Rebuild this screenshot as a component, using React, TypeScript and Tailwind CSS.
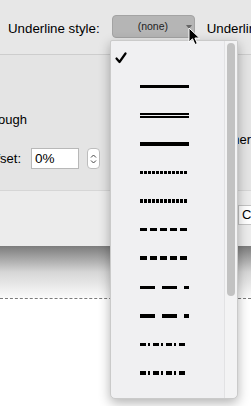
import React from 'react';

type Kind =
  | 'none'
  | 'single'
  | 'double'
  | 'thick'
  | 'dotted'
  | 'dottedThick'
  | 'dash'
  | 'dashThick'
  | 'longDash'
  | 'longDashThick'
  | 'dashDot'
  | 'dashDotThick';

const styles: Kind[] = [
  'none',
  'single',
  'double',
  'thick',
  'dotted',
  'dottedThick',
  'dash',
  'dashThick',
  'longDash',
  'longDashThick',
  'dashDot',
  'dashDotThick',
];

// builds dash segments along a 50px line
const segments = (pattern: number[], total: number) => {
  const out: [number, number][] = [];
  let x = 0;
  let i = 0;
  while (x < total) {
    const len = pattern[i % pattern.length];
    if (i % 2 === 0) out.push([x, Math.min(len, total - x)]);
    x += len;
    i++;
  }
  return out;
};

const LineSample: React.FC<{ kind: Kind }> = ({ kind }) => {
  if (kind === 'none') return null;
  const h = kind.endsWith('Thick') || kind === 'thick' ? 4 : 3;
  let segs: [number, number][] = [[0, 49]];
  if (kind === 'dotted' || kind === 'dottedThick') segs = segments([3, 1], 47);
  if (kind === 'dash' || kind === 'dashThick') segs = segments([7, 3], 47);
  if (kind === 'longDash' || kind === 'longDashThick') segs = [[0, 15], [22, 15], [44, 5]];
  if (kind === 'dashDot' || kind === 'dashDotThick') segs = segments([6, 2, 2, 3], 46);
  if (kind === 'dotted') {
    return (
      <svg width="50" height="3" shapeRendering="crispEdges">
        {segs.map(([x, w], i) => (
          <rect key={i} x={x} y={0} width={w} height={2.5} fill="#000" />
        ))}
      </svg>
    );
  }
  if (kind === 'double') {
    return (
      <svg width="50" height="5" shapeRendering="crispEdges">
        <rect x={0} y={0} width={49} height={1.5} fill="#000" />
        <rect x={0} y={3} width={49} height={1.5} fill="#000" />
      </svg>
    );
  }
  return (
    <svg width="50" height={h} shapeRendering="crispEdges">
      {segs.map(([x, w], i) => (
        <rect key={i} x={x} y={0} width={w} height={h} fill="#000" />
      ))}
    </svg>
  );
};

const Cursor = () => (
  <svg width="14" height="20" viewBox="0 0 14 20" className="absolute left-[188px] top-[27px]">
    <path d="M1 1 L1 15 L4.5 11.8 L7 17.5 L9.3 16.5 L6.9 11 L11.5 11 Z" fill="#000" stroke="#fff" strokeWidth="1" strokeLinejoin="round" />
  </svg>
);

const App: React.FC = () => {
  return (
    <div
      className="relative w-[251px] h-[406px] overflow-hidden bg-white text-black"
      style={{ fontFamily: '"Liberation Sans", Arial, sans-serif' }}
    >
      {/* header row */}
      <div className="h-[55px] bg-[#e7e7e7] border-b border-[#cdcdcd] flex items-start pt-[15px] whitespace-nowrap">
        <span className="shrink-0 ml-[8px] text-[13.3px] leading-[23px] pt-[2px]">Underline style:</span>
        <div className="shrink-0 ml-[12px] w-[83px] h-[23px] rounded-[4px] bg-[#b5b5b5] border border-[#a3a3a3] flex items-center relative">
          <span className="ml-[25px] text-[10.5px] text-[#222]">(none)</span>
          <svg width="6" height="4" className="absolute left-[73px] top-[9px]">
            <path d="M0 0 L6 0 L3 4 Z" fill="#666" />
          </svg>
        </div>
        <span className="shrink-0 ml-[12px] text-[13.3px] leading-[23px] pt-[2px]">Underline color:</span>
      </div>

      {/* body */}
      <div className="h-[135px] bg-[#e4e4e4] flex flex-col whitespace-nowrap text-[13px] leading-[15px]">
        <div className="mt-[57px] h-[15px] flex items-center">
          <div className="w-[27px] flex justify-end overflow-hidden">Strikethrough</div>
        </div>
        <div className="mt-[5px] h-[15px] flex justify-end">
          <div className="w-[13px] flex justify-end overflow-hidden">Other</div>
        </div>
        <div className="mt-[1px] h-[21px] flex items-center">
          <div className="w-[21px] flex justify-end overflow-hidden">Baseline offset:</div>
          <div className="ml-[10px] w-[48px] h-[21px] bg-white border border-[#b8b8b8] flex items-center pl-[3px] text-[13.5px]">
            0%
          </div>
          <div className="ml-[8px] w-[13px] h-[21px] rounded-[4px] bg-white border border-[#bdbdbd] flex flex-col items-center justify-center gap-[2px]">
            <svg width="7" height="4" viewBox="0 0 7 4">
              <path d="M1 3.5 L3.5 1 L6 3.5" fill="none" stroke="#444" strokeWidth="1" />
            </svg>
            <svg width="7" height="4" viewBox="0 0 7 4">
              <path d="M1 0.5 L3.5 3 L6 0.5" fill="none" stroke="#444" strokeWidth="1" />
            </svg>
          </div>
        </div>
      </div>

      {/* footer */}
      <div className="h-[56px] bg-[#ececec] border-t border-[#d6d6d6] flex justify-end pt-[14px]">
        <div className="w-[13px] h-[20px] bg-white border border-[#c4c4c4] border-r-0 flex items-center pl-[3px] text-[13px] overflow-hidden whitespace-nowrap">
          Cancel
        </div>
      </div>

      {/* window bottom shadow and page below */}
      <div className="h-[52px] bg-gradient-to-b from-[#7c7c7c] via-[#d6d6d6] to-[#fbfbfb]" />
      <div className="border-t border-dashed border-[#7a7a7a]" />

      {/* popup menu */}
      <div className="absolute left-[110px] top-[40px] w-[128px] h-[359px] bg-[#f0f0f2] border border-[#cacaca] rounded-b-[5px] rounded-t-[2px] shadow-[0_4px_12px_rgba(0,0,0,0.3)] flex">
        <div className="flex-1 flex flex-col pt-[3px]">
          {styles.map((s, i) => (
            <div key={s} className="h-[28.6px] flex items-center">
              {i === 0 ? (
                <svg width="12" height="12" viewBox="0 0 12 12" className="ml-[4px]">
                  <path d="M1.5 6.5 L4.5 10 L10.5 1.5" fill="none" stroke="#000" strokeWidth="2.2" strokeLinecap="round" strokeLinejoin="round" />
                </svg>
              ) : (
                <div className="ml-[29px] flex items-center">
                  <LineSample kind={s} />
                </div>
              )}
            </div>
          ))}
        </div>
        <div className="w-[13px] border-l border-[#e2e2e4] bg-[#f3f3f4] rounded-br-[5px] flex justify-center pt-[2px]">
          <div className="w-[8px] h-[253px] rounded-full bg-[#c2c2c2]" />
        </div>
      </div>

      <Cursor />
    </div>
  );
};

export default App;
